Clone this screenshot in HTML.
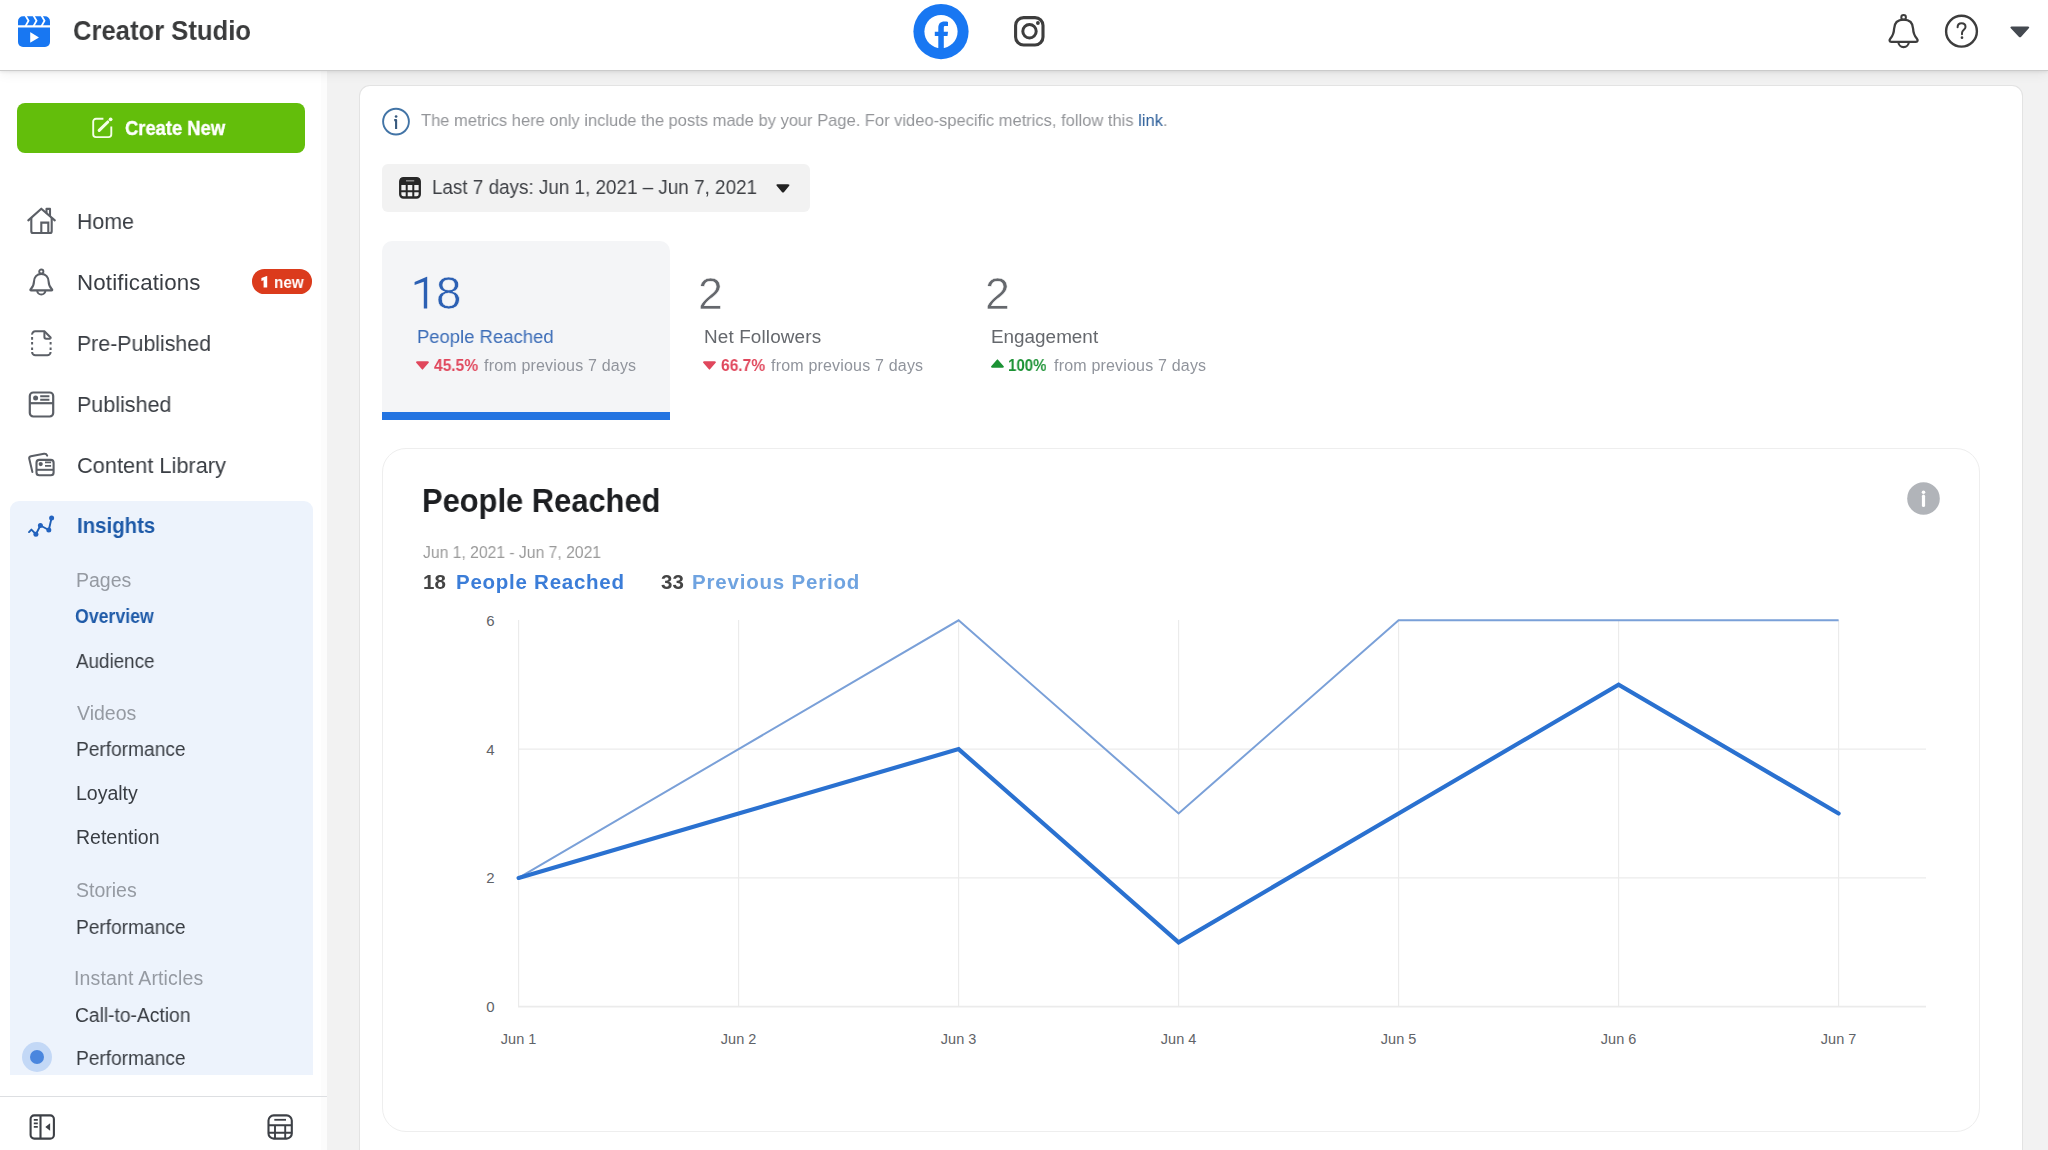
<!DOCTYPE html>
<html>
<head>
<meta charset="utf-8">
<style>
html,body{margin:0;padding:0;overflow:hidden;}
body{width:2048px;height:1150px;overflow:hidden;position:relative;background:#f2f2f2;font-family:"Liberation Sans",sans-serif;}
.abs{position:absolute;}
.t{position:absolute;white-space:nowrap;font-family:"Liberation Sans",sans-serif;-webkit-font-smoothing:antialiased;will-change:transform;}
svg{overflow:visible;}
</style>
</head>
<body>
<!-- sidebar -->
<div class="abs" style="left:0;top:70px;width:327px;height:1080px;background:#ffffff;"></div>
<div class="abs" style="left:321px;top:70px;width:6px;height:1080px;background:#fcfcfc;"></div>
<!-- insights panel -->
<div class="abs" style="left:10px;top:501px;width:303px;height:574px;background:#edf3fc;border-radius:9px 9px 0 0;"></div>
<!-- divider -->
<div class="abs" style="left:0;top:1096px;width:327px;height:1px;background:#dddfe2;"></div>

<!-- main card -->
<div class="abs" style="left:360px;top:85.5px;width:1662px;height:1064.5px;background:#ffffff;border-radius:10px 10px 0 0;box-shadow:0 0 0 1px #e3e3e3;"></div>
<!-- date button -->
<div class="abs" style="left:382px;top:163.5px;width:428px;height:48.5px;background:#f2f2f2;border-radius:6px;"></div>
<!-- tab 1 -->
<div class="abs" style="left:382px;top:241px;width:287.5px;height:179px;background:#f4f5f7;border-radius:10px 10px 0 0;"></div>
<div class="abs" style="left:382px;top:412px;width:287.5px;height:8px;background:#2374e1;"></div>
<!-- chart card -->
<div class="abs" style="left:382px;top:448px;width:1596px;height:682px;background:#ffffff;border-radius:24px;border:1.5px solid #eeeeee;"></div>

<!-- header -->
<div class="abs" style="left:0;top:0;width:2048px;height:70px;background:#ffffff;box-shadow:0 1px 0 #cbcbcb,0 2px 3px rgba(0,0,0,0.08),0 3px 12px rgba(0,0,0,0.07);"></div>

<!-- logo -->
<svg class="abs" style="left:18px;top:15.5px" width="32" height="32" viewBox="0 0 32 32">
  <path d="M0 11.5 H32 V26 A5 5 0 0 1 27 31 H5 A5 5 0 0 1 0 26 Z" fill="#1877f2"/>
  <path d="M5 0.3 H27 A5 5 0 0 1 32 5.3 V9.3 H0 V5.3 A5 5 0 0 1 5 0.3 Z" fill="#1877f2"/>
  <path d="M7.2 -1 L10.5 4.8 L7.2 10.6 M15.2 -1 L18.5 4.8 L15.2 10.6 M23.2 -1 L26.5 4.8 L23.2 10.6" stroke="#ffffff" stroke-width="1.8" fill="none"/>
  <path d="M12.2 16.5 Q12 16 12.5 16.3 L20.6 21.2 Q21 21.4 20.6 21.7 L12.5 26.4 Q12 26.6 12.2 26 Z" fill="#ffffff"/>
</svg>

<!-- facebook -->
<svg class="abs" style="left:913px;top:3.5px" width="56" height="56" viewBox="0 0 56 56">
  <circle cx="28" cy="27.6" r="27.6" fill="#1877f2"/>
  <circle cx="28" cy="27.6" r="16.6" fill="#ffffff"/>
  <path d="M25.3 50 V31.9 H21.8 V27.7 H25.3 V24.2 C25.3 19.6 27.5 17.6 31.5 17.6 C33.2 17.6 34.3 17.8 35 17.9 V22 H32.3 C31 22 30.8 22.6 30.8 23.9 V27.7 H35 L34.5 31.9 H30.8 V50 Z" fill="#1877f2"/>
</svg>
<!-- instagram -->
<svg class="abs" style="left:1014px;top:16px" width="31" height="31" viewBox="0 0 31 31">
  <rect x="1.6" y="1.6" width="27.4" height="27.4" rx="8" fill="none" stroke="#3d3d3d" stroke-width="3.1"/>
  <circle cx="15.5" cy="15.3" r="6.7" fill="none" stroke="#3d3d3d" stroke-width="3"/>
  <circle cx="23.9" cy="7" r="1.9" fill="#3d3d3d"/>
</svg>

<!-- header right icons -->
<svg class="abs" style="left:1888px;top:14px" width="31" height="35" viewBox="0 0 31 35">
  <path d="M15.6 5.6 C8.8 5.6 6.3 10 6.1 14.8 C5.9 19.5 4.8 21.8 2.4 24.6 C1 26.2 1.4 27.8 3.3 27.8 H27.9 C29.8 27.8 30.2 26.2 28.8 24.6 C26.4 21.8 25.3 19.5 25.1 14.8 C24.9 10 22.4 5.6 15.6 5.6 Z" fill="none" stroke="#3d3d3d" stroke-width="2.3" stroke-linejoin="round"/>
  <circle cx="15.6" cy="3.4" r="2.3" fill="none" stroke="#3d3d3d" stroke-width="2"/>
  <path d="M10.4 27.9 A5.2 5.2 0 0 0 20.8 27.9" fill="none" stroke="#3d3d3d" stroke-width="2.2"/>
</svg>
<svg class="abs" style="left:1944px;top:14px" width="35" height="35" viewBox="0 0 35 35">
  <circle cx="17.5" cy="17.2" r="15.4" fill="none" stroke="#3d3d3d" stroke-width="2.4"/>
  <path d="M13.6 13.2 C13.6 10.6 15.3 9.3 17.6 9.3 C19.9 9.3 21.5 10.9 21.5 12.9 C21.5 15.6 18 16 18 19 V20.3" fill="none" stroke="#3d3d3d" stroke-width="2" stroke-linecap="round"/>
  <circle cx="18" cy="23.7" r="1.35" fill="#3d3d3d"/>
</svg>
<svg class="abs" style="left:2009px;top:25px" width="22" height="14" viewBox="0 0 22 14">
  <path d="M2.5 1.5 H19 Q21 1.5 19.8 3.2 L12.2 11.7 Q11 13 9.8 11.7 L1.8 3.2 Q0.7 1.5 2.5 1.5 Z" fill="#444950"/>
</svg>

<!-- create new button -->
<div class="abs" style="left:17.4px;top:103px;width:287.5px;height:49.5px;background:#63be0b;border-radius:8px;"></div>
<svg class="abs" style="left:91px;top:116px" width="24" height="24" viewBox="0 0 24 24">
  <path d="M12.4 2.8 H5 A2.8 2.8 0 0 0 2.2 5.6 V18.3 A2.8 2.8 0 0 0 5 21.1 H17.5 A2.8 2.8 0 0 0 20.3 18.3 V10.4" fill="none" stroke="#f4ffe8" stroke-width="1.9"/>
  <path d="M8.2 14.3 L16.8 6" stroke="#f4ffe8" stroke-width="3.1" stroke-linecap="round"/>
  <circle cx="19.6" cy="3.3" r="1.9" fill="#f4ffe8"/>
</svg>

<!-- badge -->
<div class="abs" style="left:252.3px;top:269px;width:60.2px;height:24.6px;background:#db3b1c;border-radius:12.3px;"></div>
<svg class="abs" style="left:0;top:0" width="400" height="300" viewBox="0 0 400 300"><path d="M267.2 276 V287.5 H263.6 V280.3 L261.4 281.1 V278 L266.8 276 Z" fill="#ffffff"/></svg>

<!-- sidebar icons -->
<svg class="abs" style="left:26px;top:206px" width="32" height="30" viewBox="0 0 32 30">
  <path d="M2.3 14.4 L15.3 2.7 L28.8 14.4" fill="none" stroke="#5b5f66" stroke-width="2.1" stroke-linejoin="round" stroke-linecap="round"/>
  <path d="M5.3 12 V25.2 Q5.3 27 7.1 27 H23.9 Q25.7 27 25.7 25.2 V12" fill="none" stroke="#5b5f66" stroke-width="2.1"/>
  <path d="M15.3 27 V16.6 H22.3 V27" fill="none" stroke="#5b5f66" stroke-width="2.1"/>
  <path d="M20.5 7.2 V2.9 H24 V10.6" fill="none" stroke="#5b5f66" stroke-width="2.1" stroke-linejoin="round"/>
</svg>
<svg class="abs" style="left:28px;top:268px" width="27" height="30" viewBox="0 0 27 30">
  <path d="M13.3 5.9 C8.6 5.9 6.2 9.3 6 13.5 C5.8 17.5 4.8 19.3 2.8 21 C2 21.8 2.3 22.4 3.3 22.4 H23.3 C24.3 22.4 24.6 21.8 23.8 21 C21.8 19.3 20.8 17.5 20.6 13.5 C20.4 9.3 18 5.9 13.3 5.9 Z" fill="none" stroke="#5b5f66" stroke-width="2.1" stroke-linejoin="round"/>
  <circle cx="13.3" cy="3.6" r="2.1" fill="none" stroke="#5b5f66" stroke-width="1.9"/>
  <path d="M9.2 22.5 A4.1 4.1 0 0 0 17.4 22.5" fill="none" stroke="#5b5f66" stroke-width="2"/>
</svg>
<svg class="abs" style="left:30px;top:329px" width="24" height="29" viewBox="0 0 24 29">
  <path d="M2.1 5.6 A3.2 3.2 0 0 1 5.3 2.3 H14.4 L20.6 8.5 V9.8" fill="none" stroke="#5b5f66" stroke-width="2"/>
  <path d="M14.4 2.5 V8 Q14.4 9.8 16.2 9.8 H20.6" fill="none" stroke="#5b5f66" stroke-width="2"/>
  <path d="M2.1 23 A3.3 3.3 0 0 0 5.4 26.3 H17.3 A3.3 3.3 0 0 0 20.6 23" fill="none" stroke="#5b5f66" stroke-width="2"/>
  <path d="M2.1 7.9 V10.7 M2.1 12.9 V15.4 M2.1 18.5 V21 M20.6 12.9 V15.4 M20.6 18.5 V21" stroke="#5b5f66" stroke-width="2"/>
</svg>
<svg class="abs" style="left:27px;top:390px" width="29" height="29" viewBox="0 0 29 29">
  <rect x="2.8" y="2.5" width="23.4" height="24" rx="3.5" fill="none" stroke="#5b5f66" stroke-width="2.2"/>
  <path d="M2.8 13.2 H26.2" stroke="#5b5f66" stroke-width="2.2"/>
  <circle cx="8.6" cy="8" r="2.5" fill="#5b5f66"/>
  <path d="M13.2 6.3 H22.4 M13.2 9.8 H22.4" stroke="#5b5f66" stroke-width="2"/>
</svg>
<svg class="abs" style="left:27px;top:451px" width="31" height="28" viewBox="0 0 31 28">
  <path d="M5.4 21 L2.2 7.6 Q1.9 5.6 3.9 5.2 L17 2.8 Q19.3 2.4 20.2 4.6" fill="none" stroke="#5b5f66" stroke-width="2" stroke-linecap="round"/>
  <rect x="9.5" y="8.9" width="17.1" height="15.4" rx="2.8" fill="#ffffff" stroke="#5b5f66" stroke-width="2.1"/>
  <path d="M9.5 18.8 H26.6" stroke="#5b5f66" stroke-width="2"/>
  <circle cx="13.7" cy="13.1" r="2.1" fill="#5b5f66"/>
  <path d="M18 11.4 H24.1 M18 14.9 H24.1" stroke="#5b5f66" stroke-width="1.8"/>
</svg>
<svg class="abs" style="left:27px;top:514px" width="30" height="25" viewBox="0 0 30 25">
  <path d="M2 18.1 L4.4 15.6 L8.9 20.2 L13.4 11.5 L21.8 16 L24.6 3.9" fill="none" stroke="#1f5fb5" stroke-width="1.9" stroke-linejoin="round" stroke-linecap="round"/>
  <circle cx="8.9" cy="20.2" r="2.5" fill="#2363c0"/>
  <circle cx="13.4" cy="11.5" r="2.5" fill="#2363c0"/>
  <circle cx="21.8" cy="16" r="2.5" fill="#2363c0"/>
  <circle cx="24.6" cy="3.9" r="2.5" fill="#2363c0"/>
</svg>
<!-- active dot -->
<div class="abs" style="left:22px;top:1042px;width:30px;height:30px;border-radius:50%;background:#c3d8f6;"></div>
<div class="abs" style="left:30px;top:1050px;width:14px;height:14px;border-radius:50%;background:#4a86de;"></div>
<!-- bottom icons -->
<svg class="abs" style="left:28px;top:1113px" width="29" height="29" viewBox="0 0 29 29">
  <rect x="2.6" y="2.4" width="23.3" height="23.2" rx="3.6" fill="none" stroke="#3d4046" stroke-width="2.1"/>
  <path d="M12.5 2.4 V25.6" stroke="#3d4046" stroke-width="2.1"/>
  <path d="M5.8 6.8 H9.8 M5.8 10.3 H9.8 M5.8 13.9 H9.8" stroke="#3d4046" stroke-width="1.7"/>
  <path d="M22.1 10.2 V17.8 L17.3 14 Z" fill="#3d4046"/>
</svg>
<svg class="abs" style="left:265px;top:1113px" width="29" height="29" viewBox="0 0 29 29">
  <rect x="3.5" y="2.4" width="23.3" height="23.2" rx="5.2" fill="none" stroke="#3d4046" stroke-width="2.1"/>
  <path d="M9.3 6.8 H21" stroke="#3d4046" stroke-width="1.8"/>
  <path d="M3.5 12.3 H26.8 M3.5 19.8 H26.8 M10 12.3 V25.6 M20.2 12.3 V25.6" stroke="#3d4046" stroke-width="1.9"/>
</svg>

<!-- info icon -->
<svg class="abs" style="left:381px;top:107px" width="30" height="30" viewBox="0 0 30 30">
  <circle cx="15" cy="14.6" r="12.9" fill="none" stroke="#4274a6" stroke-width="1.9"/>
  <circle cx="15.1" cy="9.5" r="1.35" fill="#37597d"/>
  <path d="M13.2 13.1 H15.1 V22" fill="none" stroke="#37597d" stroke-width="2.1" stroke-linejoin="round"/>
</svg>
<!-- calendar -->
<svg class="abs" style="left:398px;top:176px" width="24" height="24" viewBox="0 0 24 24">
  <rect x="2.2" y="2.2" width="19.6" height="19.3" rx="3.2" fill="none" stroke="#282828" stroke-width="2.3"/>
  <rect x="2.2" y="2.2" width="19.6" height="6.8" rx="1" fill="#282828"/>
  <path d="M8 4.8 H16.2" stroke="#9a9a9a" stroke-width="1.3"/>
  <path d="M2.2 15.2 H21.8 M8.7 9 V21.5 M15.3 9 V21.5" stroke="#282828" stroke-width="2"/>
</svg>
<!-- date caret -->
<svg class="abs" style="left:775px;top:183px" width="16" height="11" viewBox="0 0 16 11">
  <path d="M2.3 1.3 H13 Q15.3 1.3 14 3 L9.1 8.9 Q8 10.2 6.9 8.9 L1.9 3 Q0.6 1.3 2.3 1.3 Z" fill="#222222"/>
</svg>
<!-- tab triangles -->
<svg class="abs" style="left:415px;top:360px" width="15" height="11" viewBox="0 0 15 11">
  <path d="M1 2.4 Q1 1.2 2.4 1.2 H12.5 Q13.9 1.2 13.9 2.4 L8 9.3 Q7.4 10 6.9 9.3 Z" fill="#e0475c"/>
</svg>
<svg class="abs" style="left:702px;top:360px" width="15" height="11" viewBox="0 0 15 11">
  <path d="M1 2.4 Q1 1.2 2.4 1.2 H12.5 Q13.9 1.2 13.9 2.4 L8 9.3 Q7.4 10 6.9 9.3 Z" fill="#e0475c"/>
</svg>
<svg class="abs" style="left:990px;top:358px" width="15" height="11" viewBox="0 0 15 11">
  <path d="M1 8.6 Q1 9.8 2.4 9.8 H12.5 Q13.9 9.8 13.9 8.6 L8 1.7 Q7.4 1 6.9 1.7 Z" fill="#1b9234"/>
</svg>
<!-- chart info -->
<svg class="abs" style="left:1907px;top:481.5px" width="33" height="33" viewBox="0 0 33 33">
  <circle cx="16.5" cy="16.5" r="16.3" fill="#b1b4b9"/>
  <circle cx="16.5" cy="10.2" r="1.8" fill="#ffffff"/>
  <path d="M16.5 14.2 V23.5" stroke="#ffffff" stroke-width="3.2" stroke-linecap="round"/>
</svg>

<svg class="abs" style="left:0;top:0" width="2048" height="400" viewBox="0 0 2048 400"><path d="M427.2 276.8 V308.5 H423.8 V281.8 L414.6 285.1 V281.9 L426.8 276.8 Z" fill="#2c60b3"/></svg>
<svg class="abs" style="left:0;top:0" width="2048" height="1150" viewBox="0 0 2048 1150"><line x1="518.6" y1="620" x2="518.6" y2="1006.5" stroke="#ebebeb" stroke-width="1.1"/><line x1="738.6" y1="620" x2="738.6" y2="1006.5" stroke="#ebebeb" stroke-width="1.1"/><line x1="958.6" y1="620" x2="958.6" y2="1006.5" stroke="#ebebeb" stroke-width="1.1"/><line x1="1178.6" y1="620" x2="1178.6" y2="1006.5" stroke="#ebebeb" stroke-width="1.1"/><line x1="1398.6" y1="620" x2="1398.6" y2="1006.5" stroke="#ebebeb" stroke-width="1.1"/><line x1="1618.6" y1="620" x2="1618.6" y2="1006.5" stroke="#ebebeb" stroke-width="1.1"/><line x1="1838.6" y1="620" x2="1838.6" y2="1006.5" stroke="#ebebeb" stroke-width="1.1"/><line x1="518" y1="1006.7" x2="1926" y2="1006.7" stroke="#ebebeb" stroke-width="1.8"/><line x1="518" y1="877.9" x2="1926" y2="877.9" stroke="#ebebeb" stroke-width="1.2"/><line x1="518" y1="749.1" x2="1926" y2="749.1" stroke="#ebebeb" stroke-width="1.2"/><polyline points="518.6,877.9 738.6,749.1 958.6,620.3 1178.6,813.5 1398.6,620.3 1618.6,620.3 1838.6,620.3" fill="none" stroke="#7aa0d8" stroke-width="2" stroke-linejoin="miter"/><polyline points="518.6,877.9 738.6,813.5 958.6,749.1 1178.6,942.3 1398.6,813.5 1618.6,684.7 1838.6,813.5" fill="none" stroke="#2a71d0" stroke-width="4.2" stroke-linejoin="miter" stroke-linecap="round"/><g font-family="Liberation Sans" font-size="15" fill="#5f6368"><text x="494.5" y="1012.2" text-anchor="end">0</text><text x="494.5" y="883.4" text-anchor="end">2</text><text x="494.5" y="754.6" text-anchor="end">4</text><text x="494.5" y="625.8" text-anchor="end">6</text><text x="518.6" y="1044" text-anchor="middle" font-size="14.5">Jun 1</text><text x="738.6" y="1044" text-anchor="middle" font-size="14.5">Jun 2</text><text x="958.6" y="1044" text-anchor="middle" font-size="14.5">Jun 3</text><text x="1178.6" y="1044" text-anchor="middle" font-size="14.5">Jun 4</text><text x="1398.6" y="1044" text-anchor="middle" font-size="14.5">Jun 5</text><text x="1618.6" y="1044" text-anchor="middle" font-size="14.5">Jun 6</text><text x="1838.6" y="1044" text-anchor="middle" font-size="14.5">Jun 7</text></g></svg>
<div class="t" id="t0" style="left:72.60px;top:16.31px;font-size:28.4px;line-height:28.4px;font-weight:700;color:#3a3b3c;letter-spacing:0.000px;transform:scaleX(0.9028);transform-origin:0 0;">Creator Studio</div>
<div class="t" id="t1" style="left:124.90px;top:117.80px;font-size:20.6px;line-height:20.6px;font-weight:700;color:#ffffff;letter-spacing:0.000px;transform:scaleX(0.8915);transform-origin:0 0;-webkit-text-stroke:0.4px #ffffff;">Create New</div>
<div class="t" id="t2" style="left:77.20px;top:211.01px;font-size:22.3px;line-height:22.3px;font-weight:400;color:#393d43;letter-spacing:0.000px;transform:scaleX(0.9582);transform-origin:0 0;">Home</div>
<div class="t" id="t3" style="left:77.00px;top:271.91px;font-size:22.3px;line-height:22.3px;font-weight:400;color:#393d43;letter-spacing:0.171px;">Notifications</div>
<div class="t" id="t4" style="left:77.00px;top:332.80px;font-size:22.3px;line-height:22.3px;font-weight:400;color:#393d43;letter-spacing:0.000px;transform:scaleX(0.9567);transform-origin:0 0;">Pre-Published</div>
<div class="t" id="t5" style="left:77.00px;top:393.72px;font-size:22.3px;line-height:22.3px;font-weight:400;color:#393d43;letter-spacing:0.000px;transform:scaleX(0.9639);transform-origin:0 0;">Published</div>
<div class="t" id="t6" style="left:77.00px;top:454.60px;font-size:22.3px;line-height:22.3px;font-weight:400;color:#393d43;letter-spacing:0.000px;transform:scaleX(0.9773);transform-origin:0 0;">Content Library</div>
<div class="t" id="t7" style="left:77.00px;top:514.72px;font-size:22.3px;line-height:22.3px;font-weight:700;color:#1e5aa8;letter-spacing:0.000px;transform:scaleX(0.9148);transform-origin:0 0;">Insights</div>
<div class="t" id="t8" style="left:273.80px;top:274.50px;font-size:16.7px;line-height:16.7px;font-weight:700;color:#ffffff;letter-spacing:0.000px;transform:scaleX(0.9147);transform-origin:0 0;">new</div>
<div class="t" id="t9" style="left:75.60px;top:571.31px;font-size:19.5px;line-height:19.5px;font-weight:400;color:#959aa2;letter-spacing:0.000px;">Pages</div>
<div class="t" id="t10" style="left:75.40px;top:606.90px;font-size:19.5px;line-height:19.5px;font-weight:700;color:#1e5aa8;letter-spacing:0.000px;transform:scaleX(0.9085);transform-origin:0 0;">Overview</div>
<div class="t" id="t11" style="left:75.90px;top:651.71px;font-size:19.5px;line-height:19.5px;font-weight:400;color:#393d43;letter-spacing:0.000px;transform:scaleX(0.9652);transform-origin:0 0;">Audience</div>
<div class="t" id="t12" style="left:76.90px;top:703.90px;font-size:19.5px;line-height:19.5px;font-weight:400;color:#959aa2;letter-spacing:0.000px;">Videos</div>
<div class="t" id="t13" style="left:75.80px;top:740.00px;font-size:19.5px;line-height:19.5px;font-weight:400;color:#393d43;letter-spacing:0.000px;transform:scaleX(0.9817);transform-origin:0 0;">Performance</div>
<div class="t" id="t14" style="left:75.80px;top:784.31px;font-size:19.5px;line-height:19.5px;font-weight:400;color:#393d43;letter-spacing:0.000px;">Loyalty</div>
<div class="t" id="t15" style="left:75.80px;top:828.40px;font-size:19.5px;line-height:19.5px;font-weight:400;color:#393d43;letter-spacing:0.000px;">Retention</div>
<div class="t" id="t16" style="left:75.80px;top:881.31px;font-size:19.5px;line-height:19.5px;font-weight:400;color:#959aa2;letter-spacing:0.000px;">Stories</div>
<div class="t" id="t17" style="left:75.80px;top:917.81px;font-size:19.5px;line-height:19.5px;font-weight:400;color:#393d43;letter-spacing:0.000px;transform:scaleX(0.9817);transform-origin:0 0;">Performance</div>
<div class="t" id="t18" style="left:74.40px;top:969.00px;font-size:19.5px;line-height:19.5px;font-weight:400;color:#959aa2;letter-spacing:0.166px;">Instant Articles</div>
<div class="t" id="t19" style="left:75.00px;top:1005.50px;font-size:19.5px;line-height:19.5px;font-weight:400;color:#393d43;letter-spacing:0.000px;transform:scaleX(0.9868);transform-origin:0 0;">Call-to-Action</div>
<div class="t" id="t20" style="left:75.80px;top:1049.11px;font-size:19.5px;line-height:19.5px;font-weight:400;color:#393d43;letter-spacing:0.000px;transform:scaleX(0.9817);transform-origin:0 0;">Performance</div>
<div class="t" id="t21" style="left:421.00px;top:112.00px;font-size:17px;line-height:17px;font-weight:400;color:#939599;letter-spacing:0.000px;transform:scaleX(0.9705);transform-origin:0 0;">The metrics here only include the posts made by your Page. For video-specific metrics, follow this <span style="color:#2d5f9a">link</span>.</div>
<div class="t" id="t22" style="left:431.90px;top:177.91px;font-size:19.9px;line-height:19.9px;font-weight:400;color:#3e4045;letter-spacing:0.000px;transform:scaleX(0.9480);transform-origin:0 0;">Last 7 days: Jun 1, 2021 – Jun 7, 2021</div>
<div class="t" id="t23" style="left:436.00px;top:270.51px;font-size:45.7px;line-height:45.7px;font-weight:400;color:#2c60b3;letter-spacing:0.000px;-webkit-text-stroke:0.6px #f4f5f7;">8</div>
<div class="t" id="t24" style="left:417.00px;top:328.20px;font-size:18.9px;line-height:18.9px;font-weight:400;color:#3b6cb7;letter-spacing:0.000px;transform:scaleX(0.9772);transform-origin:0 0;">People Reached</div>
<div class="t" id="t25" style="left:434.00px;top:357.50px;font-size:16px;line-height:16px;font-weight:700;color:#e0475c;letter-spacing:0.000px;transform:scaleX(0.9697);transform-origin:0 0;">45.5%</div>
<div class="t" id="t26" style="left:483.90px;top:357.50px;font-size:16px;line-height:16px;font-weight:400;color:#90949c;letter-spacing:0.189px;">from previous 7 days</div>
<div class="t" id="t27" style="left:698.20px;top:270.51px;font-size:44.8px;line-height:44.8px;font-weight:400;color:#65686d;letter-spacing:0.000px;-webkit-text-stroke:0.6px #ffffff;">2</div>
<div class="t" id="t28" style="left:704.10px;top:328.20px;font-size:18.9px;line-height:18.9px;font-weight:400;color:#65686d;letter-spacing:0.135px;">Net Followers</div>
<div class="t" id="t29" style="left:720.80px;top:357.50px;font-size:16px;line-height:16px;font-weight:700;color:#e0475c;letter-spacing:0.000px;transform:scaleX(0.9697);transform-origin:0 0;">66.7%</div>
<div class="t" id="t30" style="left:771.30px;top:357.50px;font-size:16px;line-height:16px;font-weight:400;color:#90949c;letter-spacing:0.189px;">from previous 7 days</div>
<div class="t" id="t31" style="left:985.00px;top:270.51px;font-size:44.8px;line-height:44.8px;font-weight:400;color:#65686d;letter-spacing:0.000px;-webkit-text-stroke:0.6px #ffffff;">2</div>
<div class="t" id="t32" style="left:991.00px;top:328.20px;font-size:18.9px;line-height:18.9px;font-weight:400;color:#65686d;letter-spacing:0.000px;transform:scaleX(0.9978);transform-origin:0 0;">Engagement</div>
<div class="t" id="t33" style="left:1008.00px;top:357.50px;font-size:16px;line-height:16px;font-weight:700;color:#1b9234;letter-spacing:0.000px;transform:scaleX(0.9384);transform-origin:0 0;">100%</div>
<div class="t" id="t34" style="left:1053.80px;top:357.50px;font-size:16px;line-height:16px;font-weight:400;color:#90949c;letter-spacing:0.189px;">from previous 7 days</div>
<div class="t" id="t35" style="left:421.80px;top:483.81px;font-size:33.2px;line-height:33.2px;font-weight:700;color:#1c1e21;letter-spacing:0.000px;transform:scaleX(0.9302);transform-origin:0 0;">People Reached</div>
<div class="t" id="t36" style="left:422.80px;top:545.31px;font-size:16px;line-height:16px;font-weight:400;color:#9a9a9a;letter-spacing:0.000px;transform:scaleX(0.9809);transform-origin:0 0;">Jun 1, 2021 - Jun 7, 2021</div>
<div class="t" id="t37" style="left:422.80px;top:572.00px;font-size:20.5px;line-height:20.5px;font-weight:700;color:#444444;letter-spacing:0.000px;">18</div>
<div class="t" id="t38" style="left:455.90px;top:571.50px;font-size:20.5px;line-height:20.5px;font-weight:700;color:#3b7dd8;letter-spacing:0.740px;">People Reached</div>
<div class="t" id="t39" style="left:661.00px;top:572.00px;font-size:20.5px;line-height:20.5px;font-weight:700;color:#444444;letter-spacing:0.000px;">33</div>
<div class="t" id="t40" style="left:692.00px;top:571.50px;font-size:20.5px;line-height:20.5px;font-weight:700;color:#6fa3e0;letter-spacing:0.808px;">Previous Period</div>
</body>
</html>
